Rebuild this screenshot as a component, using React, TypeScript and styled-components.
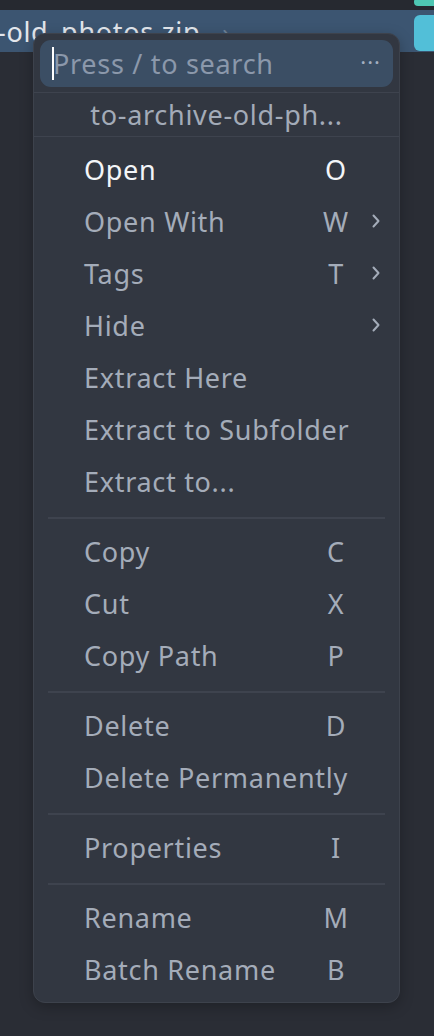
import React from "react";
import styled, { createGlobalStyle } from "styled-components";

const GlobalStyle = createGlobalStyle`
  html, body {
    margin: 0;
    padding: 0;
    background: #2a2d35;
  }
  body {
    font-family: "Noto Sans", "Open Sans", sans-serif;
    letter-spacing: 0.7px;
    -webkit-font-smoothing: antialiased;
  }
`;

const Screen = styled.div`
  position: relative;
  width: 434px;
  height: 1036px;
  overflow: hidden;
  background: #2a2d35;
`;

const TopStrip = styled.div`
  display: flex;
  justify-content: flex-end;
  height: 10px;
  background: #262930;
`;

const Swatch = styled.div<{ $color: string; $height: number }>`
  width: 20px;
  height: ${p => p.$height}px;
  margin-top: ${p => (p.$height < 10 ? -2 : 4)}px;
  border-radius: 6px 0 0 6px;
  background: ${p => p.$color};
`;

const FileRow = styled.div`
  display: flex;
  align-items: center;
  height: 42px;
  background: #3c5571;
  color: #e2e6ec;
  font-size: 27px;
  white-space: nowrap;
`;

const FileName = styled.span`
  margin-left: -3px;
`;

const Crumb = styled.span`
  margin-left: 22px;
  color: #6f8399;
  font-size: 24px;
`;

const Spacer = styled.div`
  flex: 1;
`;

const Menu = styled.div`
  position: absolute;
  left: 33px;
  top: 33px;
  width: 367px;
  box-sizing: border-box;
  background: #323741;
  border: 1px solid #3d424c;
  border-radius: 12px;
  box-shadow: 0 4px 14px rgba(0, 0, 0, 0.25);
  display: flex;
  flex-direction: column;
`;

const SearchBox = styled.div`
  display: flex;
  align-items: center;
  flex-shrink: 0;
  height: 47px;
  margin: 6px 6px 5px;
  padding: 0 12px 0 12px;
  border-radius: 11px;
  background: #3b4e64;
  color: #8b98ab;
  font-size: 27px;
`;

const Caret = styled.span`
  width: 2px;
  height: 33px;
  margin-right: -1px;
  background: #ffffff;
`;

const SearchHint = styled.span`
  flex: 1;
`;

const Dots = styled.span`
  font-size: 22px;
  letter-spacing: 1px;
  color: #a3afc0;
  padding-bottom: 6px;
`;

const Header = styled.div`
  flex-shrink: 0;
  height: 43px;
  border-top: 1px solid #3e434e;
  border-bottom: 1px solid #3e434e;
  display: flex;
  align-items: center;
  justify-content: center;
  color: #a3abb8;
  font-size: 27px;
`;

const Group = styled.div`
  padding: 6px 0 10px;

  &:first-of-type {
    padding-top: 7px;
  }
  &:last-child {
    padding-bottom: 7px;
  }
`;

const Divider = styled.div`
  flex-shrink: 0;
  height: 2px;
  margin: 0 14px;
  background: #3e434e;
`;

const Item = styled.div<{ $active?: boolean }>`
  display: grid;
  grid-template-columns: 1fr 30px 26px;
  column-gap: 12px;
  align-items: center;
  height: 52px;
  padding: 0 10px 0 50px;
  font-size: 27px;
  color: ${p => (p.$active ? "#f3f5f8" : "#a4acb9")};
  white-space: nowrap;
`;

const Key = styled.span`
  text-align: center;
`;

const Arrow = styled.span`
  display: flex;
  justify-content: center;
  align-items: center;
`;

const Chevron = () => (
  <svg width="12" height="16" viewBox="0 0 12 16">
    <polyline
      points="3.5,2.5 8.5,8 3.5,13.5"
      fill="none"
      stroke="#a4acb9"
      strokeWidth="2"
      strokeLinecap="round"
      strokeLinejoin="round"
    />
  </svg>
);

type Entry = { label: string; key?: string; sub?: boolean; active?: boolean };

const groups: Entry[][] = [
  [
    { label: "Open", key: "O", active: true },
    { label: "Open With", key: "W", sub: true },
    { label: "Tags", key: "T", sub: true },
    { label: "Hide", sub: true },
    { label: "Extract Here" },
    { label: "Extract to Subfolder" },
    { label: "Extract to..." },
  ],
  [
    { label: "Copy", key: "C" },
    { label: "Cut", key: "X" },
    { label: "Copy Path", key: "P" },
  ],
  [
    { label: "Delete", key: "D" },
    { label: "Delete Permanently" },
  ],
  [{ label: "Properties", key: "I" }],
  [
    { label: "Rename", key: "M" },
    { label: "Batch Rename", key: "B" },
  ],
];

export default function App() {
  return (
    <>
      <GlobalStyle />
      <Screen>
        <TopStrip>
          <Swatch $color="#4ec7b3" $height={8} />
        </TopStrip>
        <FileRow>
          <FileName>-old_photos.zip</FileName>
          <Crumb>›</Crumb>
          <Spacer />
          <Swatch $color="#52bfd8" $height={36} />
        </FileRow>

        <Menu>
          <SearchBox>
            <Caret />
            <SearchHint>Press / to search</SearchHint>
            <Dots>···</Dots>
          </SearchBox>
          <Header>to-archive-old-ph...</Header>
          {groups.map((g, gi) => (
            <React.Fragment key={gi}>
              {gi > 0 && <Divider />}
              <Group>
                {g.map(e => (
                  <Item key={e.label} $active={e.active}>
                    <span>{e.label}</span>
                    <Key>{e.key}</Key>
                    <Arrow>{e.sub && <Chevron />}</Arrow>
                  </Item>
                ))}
              </Group>
            </React.Fragment>
          ))}
        </Menu>
      </Screen>
    </>
  );
}
